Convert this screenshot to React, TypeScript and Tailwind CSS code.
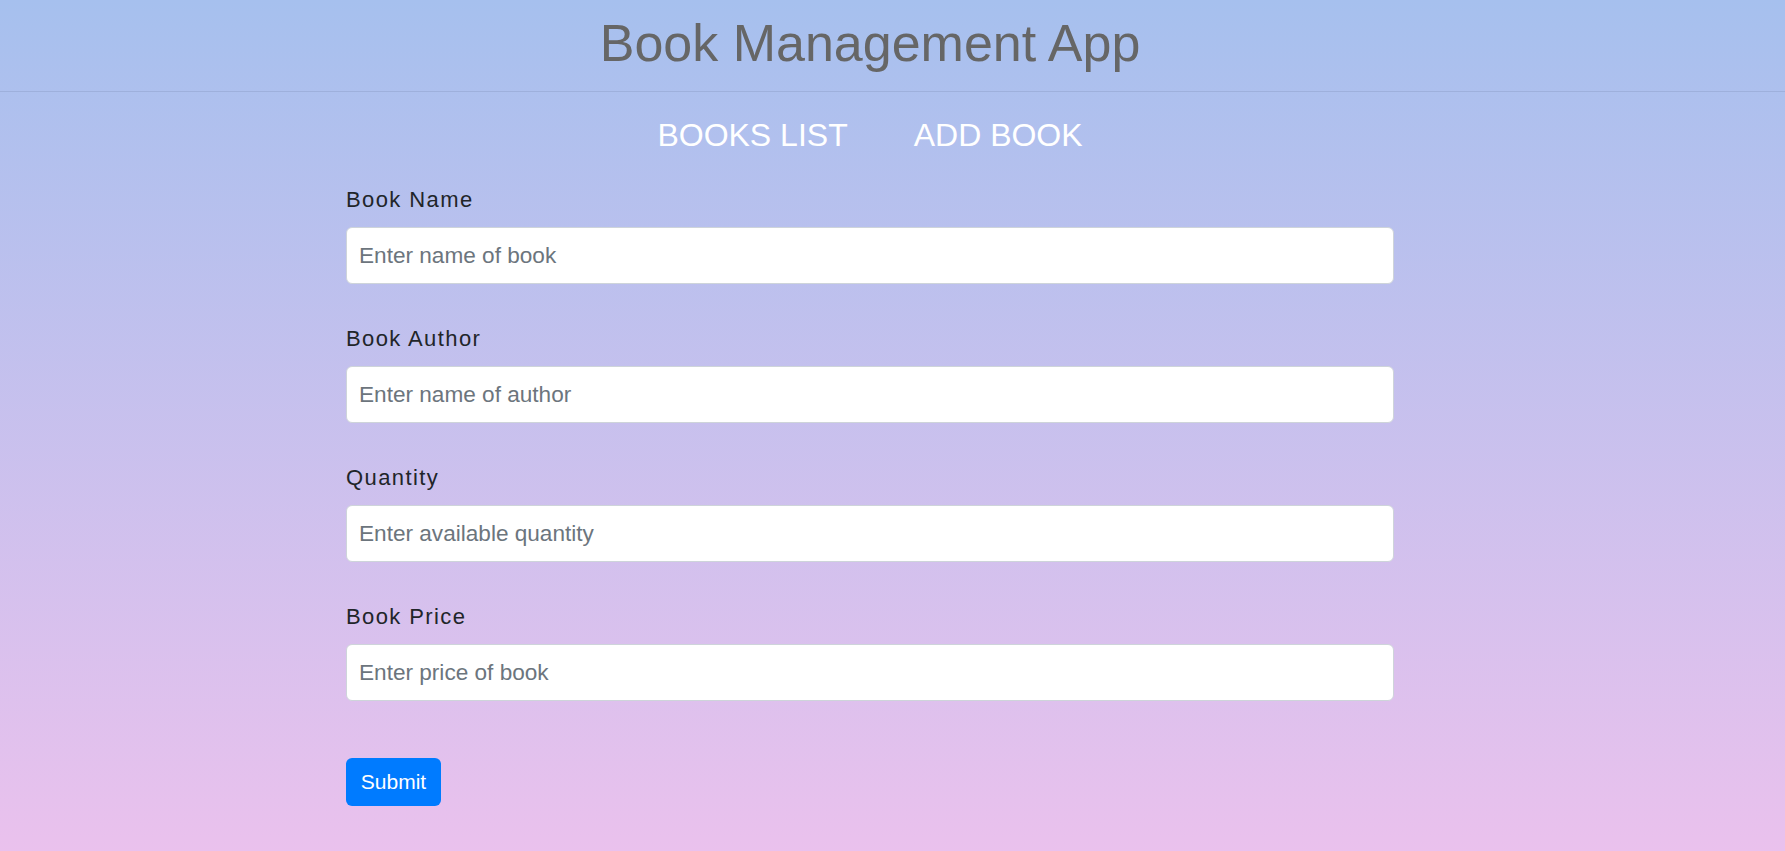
import { useState } from "react";

type Field = {
  id: string;
  label: string;
  placeholder: string;
};

const fields: Field[] = [
  { id: "name", label: "Book Name", placeholder: "Enter name of book" },
  { id: "author", label: "Book Author", placeholder: "Enter name of author" },
  { id: "quantity", label: "Quantity", placeholder: "Enter available quantity" },
  { id: "price", label: "Book Price", placeholder: "Enter price of book" },
];

export default function App() {
  const [values, setValues] = useState<Record<string, string>>({});

  return (
    <div className="min-h-[851px] h-screen bg-linear-to-b/srgb from-[#a6c0ee] to-[#eac1ed] font-['Liberation_Sans',Arial,sans-serif]">
      <header className="h-[92px] border-b border-[#9eb0dc]">
        <div className="pr-[45px] pt-[17px] text-center">
          <h1 className="text-[52px] leading-[52px] text-[#666666]">Book Management App</h1>
        </div>
      </header>

      <div className="pr-[45px]">
        <nav className="mt-[27px] flex justify-center gap-[66px] text-[32px] leading-[32px] text-white">
          <a href="#" className="uppercase">
            Books List
          </a>
          <a href="#" className="uppercase">
            Add Book
          </a>
        </nav>

        <form
          className="mx-auto mt-[32px] w-[1048px]"
          onSubmit={(e) => e.preventDefault()}
        >
          {fields.map((field) => (
            <div key={field.id} className="mb-[38px] flex flex-col">
              <label
                htmlFor={field.id}
                className="mb-[11px] text-[22px] leading-[33px] tracking-[1.4px] text-[#212529]"
              >
                {field.label}
              </label>
              <input
                id={field.id}
                type="text"
                placeholder={field.placeholder}
                value={values[field.id] ?? ""}
                onChange={(e) =>
                  setValues((prev) => ({ ...prev, [field.id]: e.target.value }))
                }
                className="h-[57px] rounded-[6px] border border-[#ced4da] bg-white px-[12px] text-[22.6px] text-[#495057] placeholder:text-[#6c757d] outline-none"
              />
            </div>
          ))}

          <button
            type="submit"
            className="mt-[57px] flex h-[48px] w-[95px] items-center justify-center rounded-[6px] bg-[#007bff] text-[21px] text-white"
          >
            Submit
          </button>
        </form>
      </div>
    </div>
  );
}
